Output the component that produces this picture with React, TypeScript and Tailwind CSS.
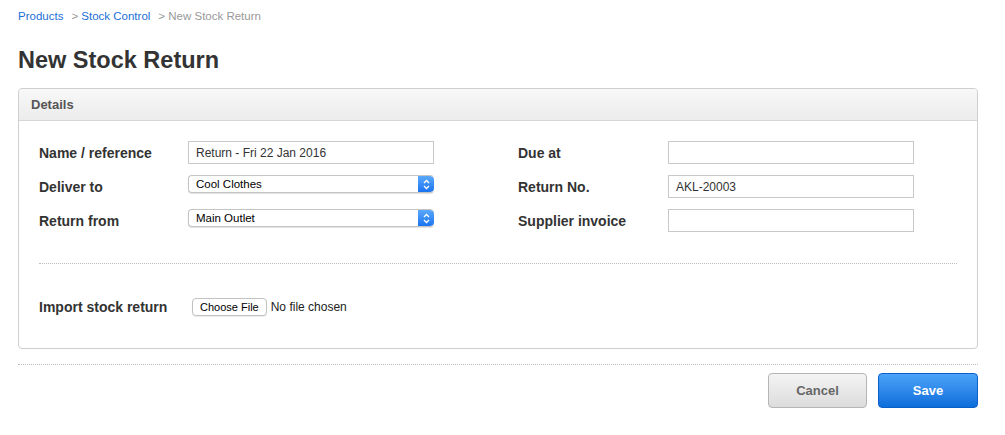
import React from "react";

const font = { fontFamily: '"Liberation Sans", Arial, sans-serif' };

function TextField({ value }: { value?: string }) {
  return (
    <input
      readOnly
      defaultValue={value ?? ""}
      className="h-[23px] w-[246px] border border-[#c9c9c9] bg-white px-[7px] text-[12px] text-[#333] outline-none"
    />
  );
}

function SelectField({ value }: { value: string }) {
  return (
    <div className="flex h-[18px] w-[246px] items-stretch overflow-hidden rounded-[4px] border border-[#c4c4c4] border-r-0 bg-white shadow-[0_1px_1px_rgba(0,0,0,0.12)]">
      <span className="flex-1 pl-[7px] text-[11.5px] leading-[16px] text-black">{value}</span>
      <span className="flex w-[16px] items-center justify-center rounded-r-[4px] bg-gradient-to-b from-[#5aa8fb] to-[#1873f0]">
        <svg width="7" height="11" viewBox="0 0 7 11" fill="none" stroke="white" strokeWidth="1.3">
          <path d="M1 4 L3.5 1.5 L6 4" />
          <path d="M1 7 L3.5 9.5 L6 7" />
        </svg>
      </span>
    </div>
  );
}

function Row({ label, children }: { label: string; children: React.ReactNode }) {
  return (
    <div className="flex h-[23px] items-start">
      <div className="w-[149px] pt-[4px] text-[14px] font-bold leading-[16px] text-[#333]">{label}</div>
      {children}
    </div>
  );
}

export default function App() {
  return (
    <div className="min-h-screen bg-white pl-[18px] pr-[27px]" style={font}>
      <nav className="pt-[10px] text-[11.5px] leading-[13px]">
        <a className="text-[#1a6fd6]">Products</a>
        <span className="ml-[8px] text-[#999]">&gt; </span>
        <a className="text-[#1a6fd6]">Stock Control</a>
        <span className="ml-[8px] text-[#999]">&gt; New Stock Return</span>
      </nav>

      <h1 className="mt-[22px] text-[23.5px] font-bold leading-[30px] text-[#333]">New Stock Return</h1>

      <section className="mt-[13px] rounded-[4px] border border-[#cfcfcf]">
        <header className="h-[32px] rounded-t-[4px] border-b border-[#d6d6d6] bg-gradient-to-b from-[#f8f8f8] to-[#ececec] px-[12px] text-[13px] font-bold leading-[31px] text-[#555]">
          Details
        </header>
        <div className="px-[20px] pt-[20px] pb-[32px]">
          <div className="flex">
            <div className="flex w-[479px] flex-col gap-[11px]">
              <Row label="Name / reference">
                <TextField value="Return - Fri 22 Jan 2016" />
              </Row>
              <Row label="Deliver to">
                <SelectField value="Cool Clothes" />
              </Row>
              <Row label="Return from">
                <SelectField value="Main Outlet" />
              </Row>
            </div>
            <div className="flex flex-col gap-[11px]">
              <Row label="Due at">
                <div className="w-[1px]" />
                <TextField />
              </Row>
              <Row label="Return No.">
                <div className="w-[1px]" />
                <TextField value="AKL-20003" />
              </Row>
              <Row label="Supplier invoice">
                <div className="w-[1px]" />
                <TextField />
              </Row>
            </div>
          </div>

          <div className="mt-[31px] border-t border-dotted border-[#bdbdbd]" />

          <div className="mt-[34px] flex h-[18px] items-center">
            <div className="w-[153px] text-[14px] font-bold text-[#333]">Import stock return</div>
            <button className="h-[18px] rounded-[4px] border border-[#c2c2c2] bg-white px-[7px] text-[11px] leading-[16px] text-black shadow-[0_1px_1px_rgba(0,0,0,0.08)]">
              Choose File
            </button>
            <span className="ml-[4px] text-[12px] text-[#222]">No file chosen</span>
          </div>
        </div>
      </section>

      <div className="mt-[15px] border-t border-dotted border-[#bdbdbd]" />

      <div className="mt-[8px] flex justify-end gap-[11px]">
        <button className="h-[35px] w-[99px] rounded-[4px] border border-[#b5b5b5] bg-gradient-to-b from-[#f4f4f4] to-[#dcdcdc] text-[13px] font-bold text-[#666]">
          Cancel
        </button>
        <button className="h-[35px] w-[100px] rounded-[4px] border border-[#0a5fc8] bg-gradient-to-b from-[#4ba4f8] to-[#0b6ddb] text-[13px] font-bold text-white">
          Save
        </button>
      </div>
    </div>
  );
}
